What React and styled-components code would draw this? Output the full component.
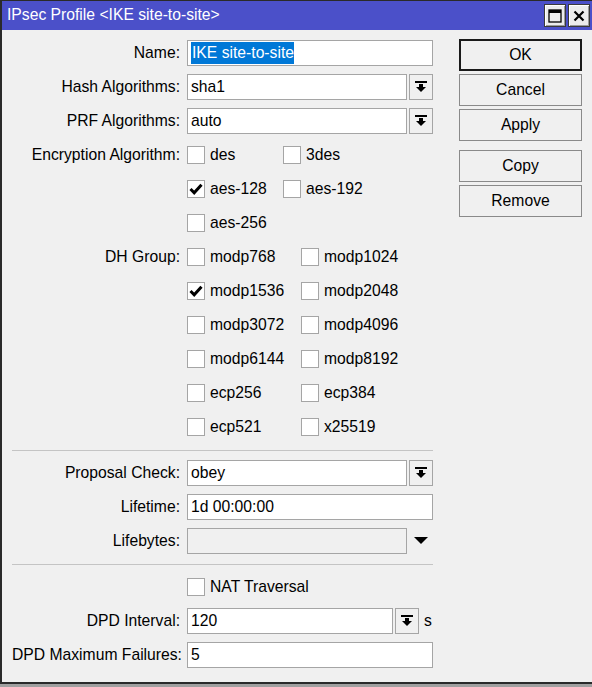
import React from "react";
import styled, { createGlobalStyle } from "styled-components";

const Global = createGlobalStyle`
  html, body { margin: 0; padding: 0; background: #a0a0a0; }
  body { font-family: "Liberation Sans", Arial, sans-serif; font-size: 15.7px; color: #000; }
  * { box-sizing: border-box; }
`;

const Window = styled.div`
  width: 592px;
  background: #f0f0f0;
  border-top: 1px solid #2a2a2a;
  border-left: 2px solid #2a2a2a;
  border-bottom: 2px solid #2a2a2a;
  display: flex;
  flex-direction: column;
`;

const TitleBar = styled.div`
  height: 29px;
  background: #4b50c9;
  color: #fff;
  display: flex;
  align-items: center;
  padding: 0 2px 0 5px;
  font-size: 15.7px;
`;

const TitleText = styled.div`
  flex: 1;
  padding-bottom: 1px;
`;

const TitleButtons = styled.div`
  display: flex;
  gap: 2px;
  align-self: flex-start;
  margin-top: 3px;
`;

const TitleButton = styled.div`
  width: 22px;
  height: 23px;
  background: #ececec;
  border: 1px solid #3a3a3a;
  box-shadow: inset 1px 1px 0 #fff, inset -1px -1px 0 #9a9a9a;
  display: flex;
  align-items: center;
  justify-content: center;
`;

const Body = styled.div`
  display: flex;
  padding: 6px 0 10px 10px;
`;

const Form = styled.div`
  width: 421px;
  display: flex;
  flex-direction: column;
`;

const Row = styled.div`
  height: 34px;
  display: flex;
  align-items: center;
`;

const Label = styled.div`
  width: 169px;
  text-align: right;
  white-space: nowrap;
  padding-right: 1px;
  flex: none;
`;

const Field = styled.div`
  margin-left: 6px;
  width: 246px;
  display: flex;
  align-items: center;
  gap: 2px;
`;

const Input = styled.div`
  height: 26px;
  flex: ${(p) => (p.$w ? "none" : "1")};
  width: ${(p) => (p.$w ? p.$w + "px" : "auto")};
  background: ${(p) => (p.$disabled ? "#f0f0f0" : "#fff")};
  border: 1px solid #a5a5a5;
  display: flex;
  align-items: center;
  padding-left: 3px;
  white-space: nowrap;
  overflow: hidden;
`;

const Selected = styled.span`
  background: #0078d7;
  color: #fff;
  padding: 2px 0 2px 1px;
`;

const DropBtn = styled.div`
  width: 24px;
  height: 26px;
  flex: none;
  background: #f0f0f0;
  border: 1px solid #a5a5a5;
  display: flex;
  align-items: center;
  justify-content: center;
`;

const PlainArrow = styled.div`
  width: 24px;
  height: 26px;
  flex: none;
  display: flex;
  align-items: center;
  justify-content: center;
`;

const Unit = styled.span`
  margin-left: 3px;
`;

const CheckGroup = styled.div`
  margin-left: 6px;
  display: flex;
  align-items: center;
`;

const CheckItem = styled.label`
  width: ${(p) => p.$w}px;
  display: flex;
  align-items: center;
  gap: 5px;
  flex: none;
`;

const Box = styled.span`
  width: 18px;
  height: 18px;
  background: #fff;
  border: 1px solid #a5a5a5;
  display: flex;
  align-items: center;
  justify-content: center;
  flex: none;
`;

const Separator = styled.div`
  height: 1px;
  background: #c4c4c4;
  margin: 6px 0 5px;
`;

const Buttons = styled.div`
  margin-left: 26px;
  margin-top: 3px;
  width: 123px;
  display: flex;
  flex-direction: column;
  gap: 3px;
`;

const Button = styled.div`
  height: 32px;
  background: #f0f0f0;
  border: 1px solid ${(p) => (p.$default ? "#1a1a1a" : "#8a8a8a")};
  box-shadow: ${(p) => (p.$default ? "inset 0 0 0 1px #1a1a1a" : "none")};
  display: flex;
  align-items: center;
  justify-content: center;
  margin-top: ${(p) => (p.$space ? "6px" : "0")};
`;

const DropIcon = () => (
  <svg width="12" height="12" viewBox="0 0 12 12">
    <rect x="0" y="0" width="12" height="2" fill="#000" />
    <rect x="4" y="3" width="4" height="3" fill="#000" />
    <polygon points="1,6 11,6 6,11" fill="#000" />
  </svg>
);

const Triangle = () => (
  <svg width="14" height="8" viewBox="0 0 14 8">
    <polygon points="0,0 14,0 7,7" fill="#000" />
  </svg>
);

const Check = () => (
  <svg width="14" height="14" viewBox="0 0 14 14">
    <polyline points="1.5,7 5.2,10.8 12.5,2.8" fill="none" stroke="#000" strokeWidth="3" />
  </svg>
);

const MaxIcon = () => (
  <svg width="14" height="14" viewBox="0 0 14 14">
    <rect x="1" y="1" width="12" height="12" fill="none" stroke="#000" strokeWidth="1.3" />
    <rect x="1" y="1" width="12" height="3" fill="#000" />
  </svg>
);

const CloseIcon = () => (
  <svg width="12" height="12" viewBox="0 0 12 12">
    <path d="M1.5 1.5 L10.5 10.5 M10.5 1.5 L1.5 10.5" stroke="#000" strokeWidth="2.2" />
  </svg>
);

const Cb = ({ label, checked, w }) => (
  <CheckItem $w={w}>
    <Box>{checked && <Check />}</Box>
    <span>{label}</span>
  </CheckItem>
);

const CheckRow = ({ label, items, w }) => (
  <Row>
    <Label>{label}</Label>
    <CheckGroup>
      {items.map((it) => (
        <Cb key={it[0]} label={it[0]} checked={it[1]} w={w} />
      ))}
    </CheckGroup>
  </Row>
);

const SelectRow = ({ label, value }) => (
  <Row>
    <Label>{label}</Label>
    <Field>
      <Input>{value}</Input>
      <DropBtn>
        <DropIcon />
      </DropBtn>
    </Field>
  </Row>
);

const enc = [
  [["des", false], ["3des", false]],
  [["aes-128", true], ["aes-192", false]],
  [["aes-256", false]],
];

const dh = [
  [["modp768", false], ["modp1024", false]],
  [["modp1536", true], ["modp2048", false]],
  [["modp3072", false], ["modp4096", false]],
  [["modp6144", false], ["modp8192", false]],
  [["ecp256", false], ["ecp384", false]],
  [["ecp521", false], ["x25519", false]],
];

export default function App() {
  return (
    <>
      <Global />
      <Window>
        <TitleBar>
          <TitleText>IPsec Profile &lt;IKE site-to-site&gt;</TitleText>
          <TitleButtons>
            <TitleButton>
              <MaxIcon />
            </TitleButton>
            <TitleButton>
              <CloseIcon />
            </TitleButton>
          </TitleButtons>
        </TitleBar>
        <Body>
          <Form>
            <Row>
              <Label>Name:</Label>
              <Field>
                <Input>
                  <Selected>IKE site-to-site</Selected>
                </Input>
              </Field>
            </Row>
            <SelectRow label="Hash Algorithms:" value="sha1" />
            <SelectRow label="PRF Algorithms:" value="auto" />
            {enc.map((items, i) => (
              <CheckRow key={"e" + i} label={i === 0 ? "Encryption Algorithm:" : ""} items={items} w={96} />
            ))}
            {dh.map((items, i) => (
              <CheckRow key={"d" + i} label={i === 0 ? "DH Group:" : ""} items={items} w={114} />
            ))}
            <Separator />
            <SelectRow label="Proposal Check:" value="obey" />
            <Row>
              <Label>Lifetime:</Label>
              <Field>
                <Input>1d 00:00:00</Input>
              </Field>
            </Row>
            <Row>
              <Label>Lifebytes:</Label>
              <Field>
                <Input $disabled />
                <PlainArrow>
                  <Triangle />
                </PlainArrow>
              </Field>
            </Row>
            <Separator />
            <CheckRow label="" items={[["NAT Traversal", false]]} w={200} />
            <Row>
              <Label>DPD Interval:</Label>
              <Field>
                <Input $w={206}>120</Input>
                <DropBtn>
                  <DropIcon />
                </DropBtn>
                <Unit>s</Unit>
              </Field>
            </Row>
            <Row>
              <Label>DPD Maximum Failures:</Label>
              <Field>
                <Input>5</Input>
              </Field>
            </Row>
          </Form>
          <Buttons>
            <Button $default>OK</Button>
            <Button>Cancel</Button>
            <Button>Apply</Button>
            <Button $space>Copy</Button>
            <Button>Remove</Button>
          </Buttons>
        </Body>
      </Window>
    </>
  );
}
